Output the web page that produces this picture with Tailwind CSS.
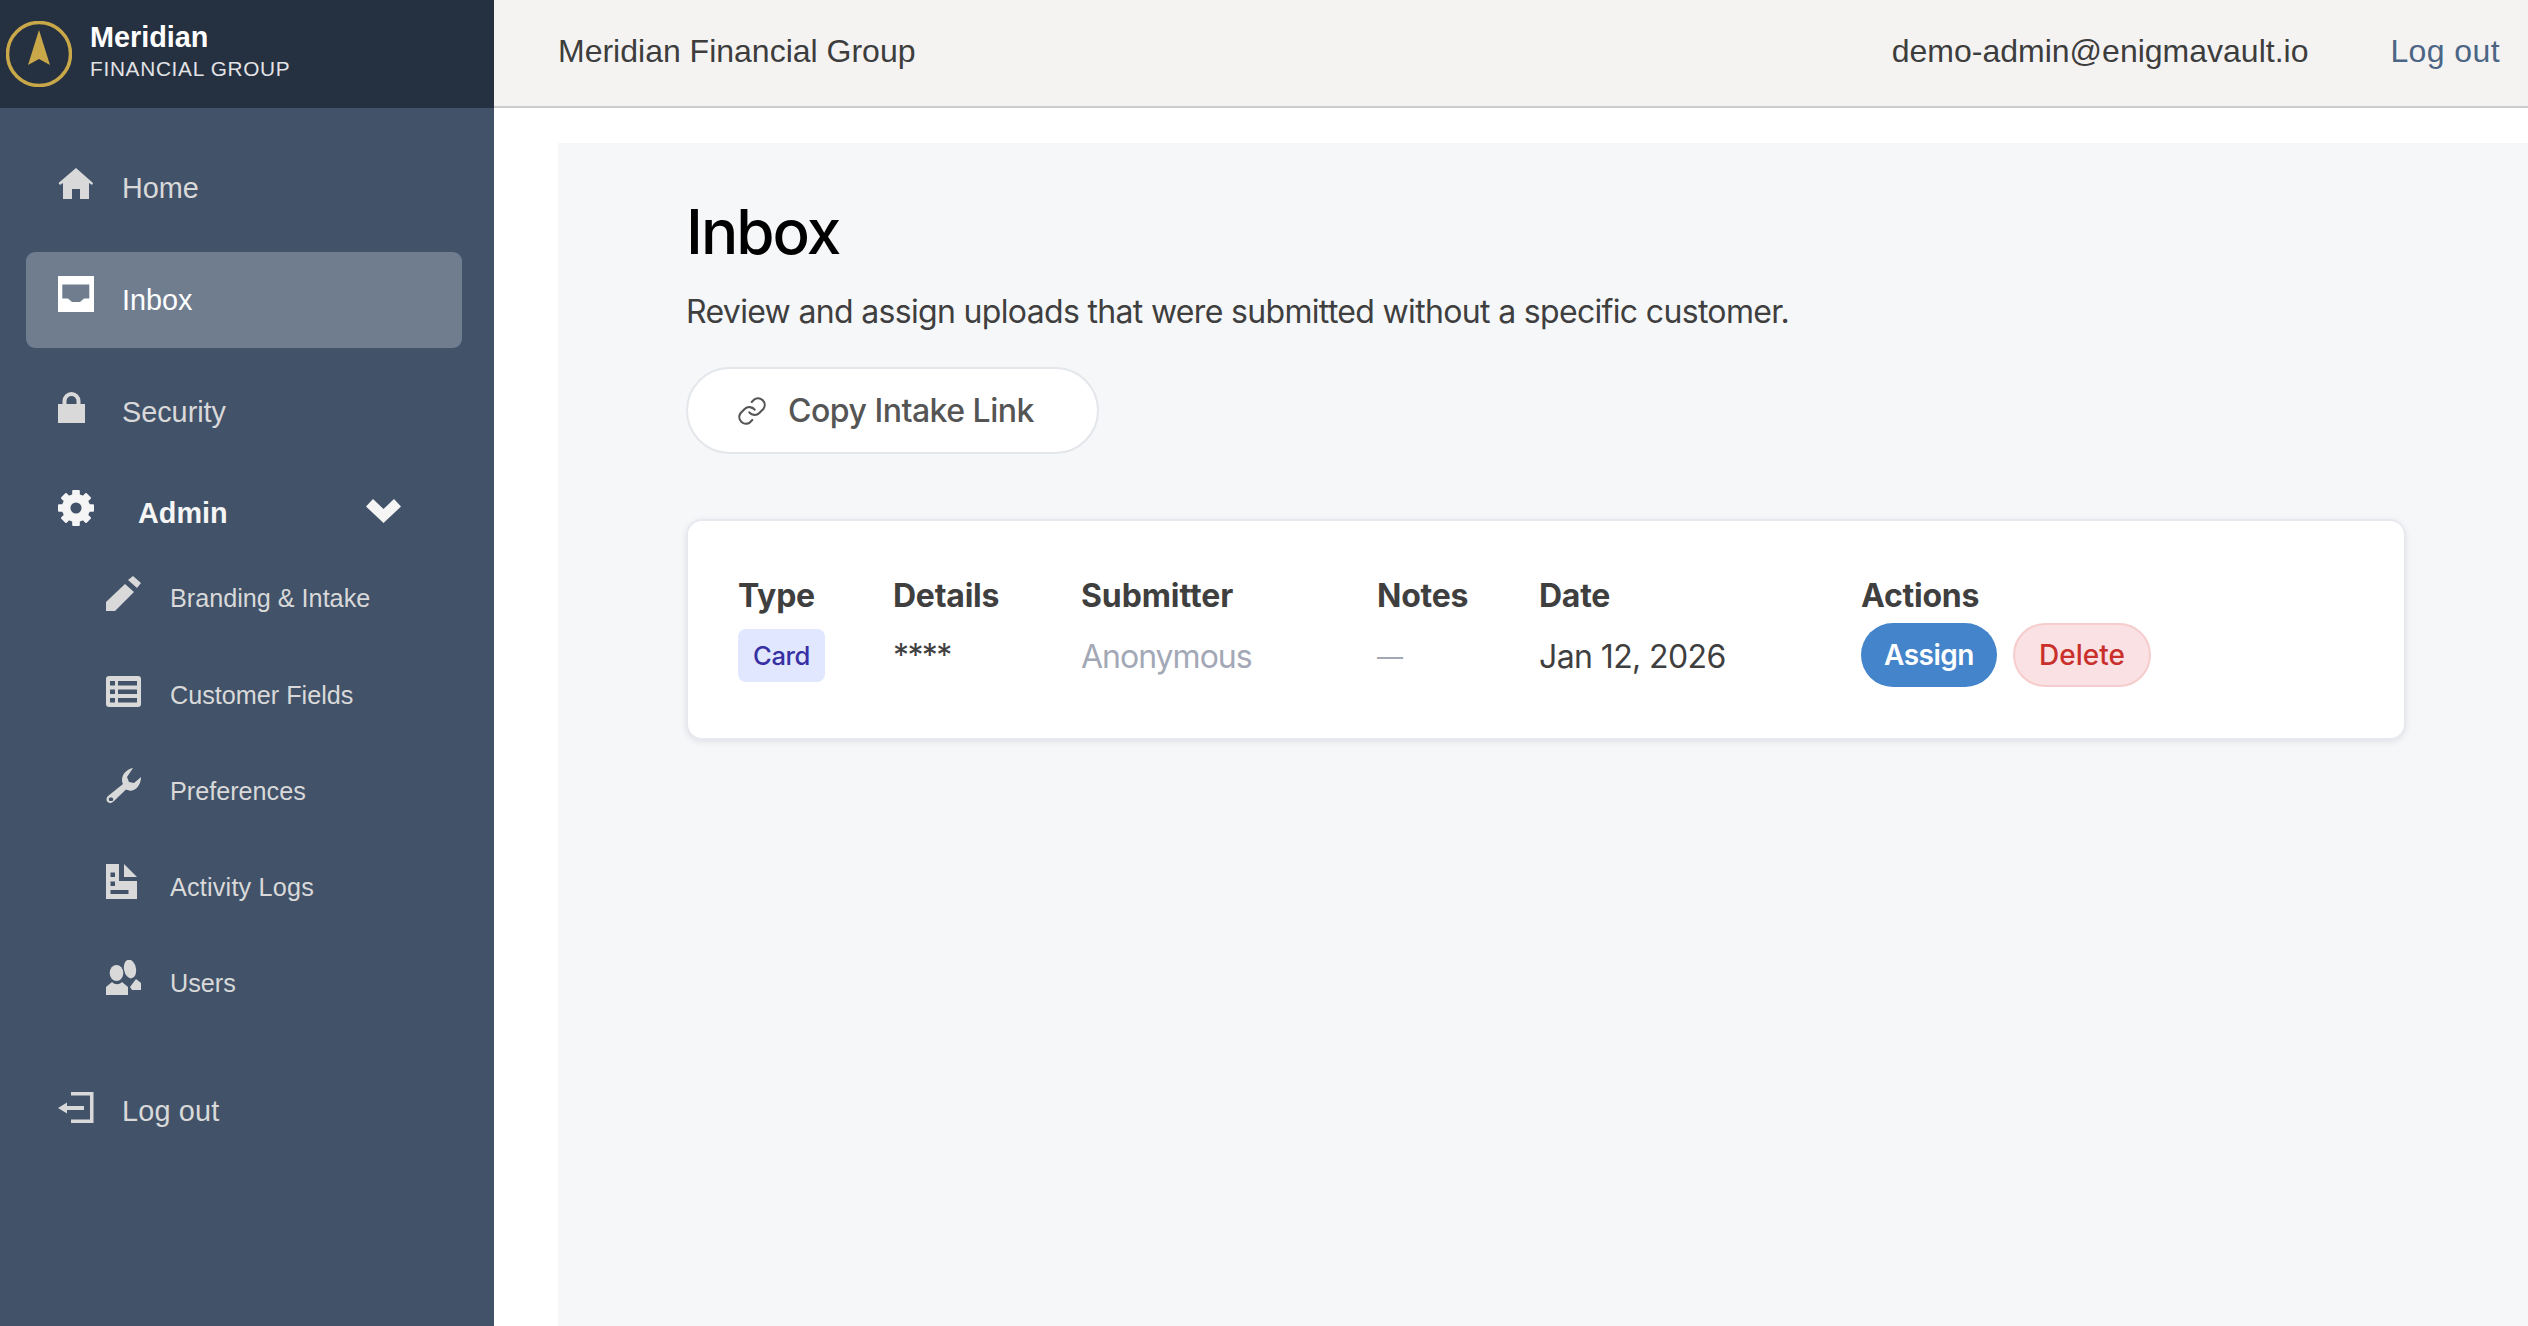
<!DOCTYPE html>
<html lang="en">
<head>
    <meta charset="UTF-8">
    <meta name="viewport" content="width=device-width, initial-scale=1.0">
    <title>Inbox - Meridian Financial Group</title>
    <script src="https://cdn.jsdelivr.net/npm/@tailwindcss/browser@4"></script>
</head>
<body class="bg-white">
<div class="flex h-[1326px] w-[2528px] overflow-hidden font-['Liberation_Sans',sans-serif]">
    <!-- Sidebar -->
    <aside class="w-[494px] shrink-0 bg-[#415269] text-[#d9d9d9]">
        <div class="flex h-[108px] items-center bg-[#253040] pl-[6px]">
            <svg class="w-[66px] h-[66px] mr-[18px] shrink-0" viewBox="0 0 66 66">
                <circle cx="33" cy="33" r="31.5" fill="none" stroke="#c8a848" stroke-width="3.5"/>
                <path d="M33 9 L44 44 L33 38 L22 44 Z" fill="#c8a848"/>
            </svg>
            <div class="-mt-[3px]">
                <div class="text-[28.8px] leading-[30px] font-bold text-white">Meridian</div>
                <div class="mt-[3px] text-[20.8px] leading-[28px] tracking-[0.7px] text-[#e2e3e6]">FINANCIAL GROUP</div>
            </div>
        </div>

        <nav class="pt-[32px] text-[28.8px]">
            <a class="flex h-[96px] ml-[26px] mr-[32px] px-[32px] pt-[1px] items-center">
                <span class="w-[64px] shrink-0">
                    <svg class="w-[36px] h-[32px] mb-[10px]" viewBox="0 0 36 32" fill="#d9d9d9"><path d="M18 0 L35 15 L34 17 L31 15 V31 H22 V21 H14 V31 H5 V15 L2 17 L0.5 15 Z"/></svg>
                </span>
                <span>Home</span>
            </a>
            <a class="flex h-[96px] ml-[26px] mr-[32px] mt-[16px] px-[32px] pt-[1px] items-center rounded-[9px] bg-[#707d8f] text-white">
                <span class="w-[64px] shrink-0">
                    <svg class="w-[36px] h-[36px] mb-[14px]" viewBox="0 0 36 36" fill="#fff"><path fill-rule="evenodd" d="M0 0 H36 V36 H0 Z M4.3 8.5 V22.5 H10 L14 26 H22 L26 22.5 H31.3 V8.5 Z"/></svg>
                </span>
                <span>Inbox</span>
            </a>
            <a class="flex h-[96px] ml-[26px] mr-[32px] mt-[16px] px-[32px] pt-[1px] items-center">
                <span class="w-[64px] shrink-0">
                    <svg class="w-[27px] h-[31px] mb-[10px]" viewBox="0 0 27 31" fill="#d9d9d9"><path fill-rule="evenodd" d="M0 12 H4.5 V9 A9 9 0 0 1 22.5 9 V12 H27 V31 H0 Z M8.5 12 H18.5 V9 A5 5 0 0 0 8.5 9 Z"/></svg>
                </span>
                <span>Security</span>
            </a>

            <!-- Admin group -->
            <div class="flex h-[64px] mx-[26px] mt-[21px] px-[32px] pt-[2px] items-center text-[#f5f5f5]">
                <span class="w-[80px] shrink-0">
                    <svg class="w-[36px] h-[36px] mb-[12px]" viewBox="0 0 36 36" fill="#f5f5f5">
                        <circle cx="18" cy="18" r="9.8" fill="none" stroke="#f5f5f5" stroke-width="8.5"/>
                        <g>
                            <rect x="14.2" y="0" width="7.6" height="6" rx="1"/>
                            <rect x="14.2" y="0" width="7.6" height="6" rx="1" transform="rotate(45 18 18)"/>
                            <rect x="14.2" y="0" width="7.6" height="6" rx="1" transform="rotate(90 18 18)"/>
                            <rect x="14.2" y="0" width="7.6" height="6" rx="1" transform="rotate(135 18 18)"/>
                            <rect x="14.2" y="0" width="7.6" height="6" rx="1" transform="rotate(180 18 18)"/>
                            <rect x="14.2" y="0" width="7.6" height="6" rx="1" transform="rotate(225 18 18)"/>
                            <rect x="14.2" y="0" width="7.6" height="6" rx="1" transform="rotate(270 18 18)"/>
                            <rect x="14.2" y="0" width="7.6" height="6" rx="1" transform="rotate(315 18 18)"/>
                        </g>
                    </svg>
                </span>
                <span class="w-[228px] shrink-0 font-bold">Admin</span>
                <svg class="w-[35px] h-[24px] mb-[6px]" viewBox="0 0 35 24" fill="#f5f5f5"><path d="M0 7.5 L7 0 L17.5 10 L28 0 L35 7.5 L17.5 24 Z"/></svg>
            </div>

            <div class="mt-[5px] text-[25.2px]">
                <a class="flex h-[96px] pl-[106px] pt-[2px] items-center">
                    <span class="w-[64px] shrink-0">
                        <svg class="w-[35px] h-[35px] mb-[12px]" viewBox="0 0 35 35" fill="#d9d9d9"><path d="M0 35 V26 L19 8 L28 16 L9 35 Z M22 4 L27 0 L35 7 L31 12 Z"/></svg>
                    </span>
                    <span>Branding &amp; Intake</span>
                </a>
                <a class="flex h-[96px] pl-[106px] pt-[3px] items-center">
                    <span class="w-[64px] shrink-0">
                        <svg class="w-[35px] h-[31px] mb-[8px]" viewBox="0 0 35 31" fill="#d9d9d9"><path fill-rule="evenodd" d="M3 0 H32 A3 3 0 0 1 35 3 V28 A3 3 0 0 1 32 31 H3 A3 3 0 0 1 0 28 V3 A3 3 0 0 1 3 0 Z M4 5 V9.5 H9 V5 Z M12 5 V9.5 H31 V5 Z M4 13.5 V18 H9 V13.5 Z M12 13.5 V18 H31 V13.5 Z M4 22 V26.5 H9 V22 Z M12 22 V26.5 H31 V22 Z"/></svg>
                    </span>
                    <span>Customer Fields</span>
                </a>
                <a class="flex h-[96px] pl-[106px] pt-[3px] items-center">
                    <span class="w-[64px] shrink-0">
                        <svg class="w-[35px] h-[35px] mb-[12px]" viewBox="0 0 35 35" fill="#d9d9d9"><path fill-rule="evenodd" d="M27 0 C21 1 16 6 16 12 C16 14 16.5 15 17 16 L2 28 C0 30 0 33 2 34 C4 36 6 35 8 33 L20 21.5 C22 22.5 24 23 26 22.5 C31 21.5 35 16 35 9 L28 15 L23 14 L21 9 Z M5 29.5 A1.8 1.8 0 1 0 5 33 A1.8 1.8 0 1 0 5 29.5 Z"/></svg>
                    </span>
                    <span>Preferences</span>
                </a>
                <a class="flex h-[96px] pl-[106px] pt-[3px] items-center">
                    <span class="w-[64px] shrink-0">
                        <svg class="w-[31px] h-[35px] mb-[12px]" viewBox="0 0 31 35" fill="#d9d9d9"><path fill-rule="evenodd" d="M0 0 H13 V17 H31 V35 H0 Z M4.5 8.5 V13 H9 V8.5 Z M4.5 17.5 V22 H9 V17.5 Z M4.5 26 V30 H22.5 V26 Z"/><path d="M18 0 L31 13 H18 Z"/></svg>
                    </span>
                    <span class="tracking-[0.2px]">Activity Logs</span>
                </a>
                <a class="flex h-[96px] pl-[106px] pt-[3px] items-center">
                    <span class="w-[64px] shrink-0">
                        <svg class="w-[35px] h-[35px] mb-[12px]" viewBox="0 0 35 35" fill="#d9d9d9">
                            <ellipse cx="10.5" cy="13" rx="6.8" ry="8"/>
                            <ellipse cx="24" cy="9" rx="6" ry="9.5" transform="rotate(-10 24 9)"/>
                            <path d="M0 35 V27 L6 22 C9 25 13 25 16 22 L22 27 V35 Z"/>
                            <path d="M26 30 L24 27 L30 19 L35 23 V30 Z"/>
                        </svg>
                    </span>
                    <span>Users</span>
                </a>
            </div>

            <a class="flex h-[96px] mx-[26px] mt-[32px] px-[32px] pt-[3px] items-center">
                <span class="w-[64px] shrink-0">
                    <svg class="w-[36px] h-[31px] mb-[8px]" viewBox="0 0 36 31" fill="#d9d9d9"><path d="M13 0 H35.5 V31 H13 V27.5 H32 V3.5 H13 Z M0 16 L9 10.5 V14 H26 V18 H9 V21.5 Z"/></svg>
                </span>
                <span class="tracking-[0.2px]">Log out</span>
            </a>
        </nav>
    </aside>

    <div class="flex-1 flex flex-col min-w-0">
        <!-- Top bar -->
        <header class="flex h-[108px] shrink-0 items-center border-b-2 border-[#cbcbcb] bg-[#f4f3f2] pl-[64px] pr-[28px] pb-[4px] text-[32px] text-[#3d3d3d]">
            <span>Meridian Financial Group</span>
            <span class="ml-auto">demo-admin@enigmavault.io</span>
            <a class="ml-[82px] tracking-[0.4px] text-[#4c6585]">Log out</a>
        </header>

        <!-- Main content -->
        <main class="mt-[35px] ml-[64px] flex-1 bg-[#f6f7f9] pl-[128px] pt-[53px] font-['Inter',sans-serif]">
            <h1 class="text-[62px] leading-[72px] font-[550] tracking-[-2px] text-black">Inbox</h1>
            <p class="mt-[24px] text-[32px] leading-[40px] tracking-[-0.67px] text-[#3f3f3f]">Review and assign uploads that were submitted without a specific customer.</p>

            <button class="mt-[35px] flex h-[87px] w-[413px] items-center rounded-full border-2 border-[#e3e6ea] bg-white pl-[48px] pt-[1px] text-[32px] font-medium tracking-[-0.5px] text-[#555555]">
                <svg class="w-[32px] h-[32px] mr-[20px] shrink-0" viewBox="0 0 24 24" fill="none" stroke="#555555" stroke-width="1.6" stroke-linecap="round" stroke-linejoin="round">
                    <path d="M10 13a5 5 0 0 0 7.5.5l3-3a5 5 0 0 0-7-7l-1.7 1.7"/>
                    <path d="M14 11a5 5 0 0 0-7.5-.5l-3 3a5 5 0 0 0 7 7l1.7-1.7"/>
                </svg>
                Copy Intake Link
            </button>

            <!-- Uploads table -->
            <div class="mt-[65px] w-[1720px] rounded-[16px] border-2 border-[#e8e9ef] bg-white pt-[54px] pb-[51px] pl-[50px] shadow-[0_2px_6px_rgba(30,40,60,0.1)]">
                <div class="grid grid-cols-[155px_188px_296px_162px_322px_auto] grid-rows-[40px_64px] gap-y-[8px] items-center text-[32px] text-[#3f3f3f]">
                    <div class="pt-[1px] font-bold tracking-[-0.25px]">Type</div>
                    <div class="pt-[1px] font-bold tracking-[-0.25px]">Details</div>
                    <div class="pt-[1px] font-bold tracking-[-0.1px]">Submitter</div>
                    <div class="pt-[1px] font-bold tracking-[-0.25px]">Notes</div>
                    <div class="pt-[1px] font-bold tracking-[-0.25px]">Date</div>
                    <div class="pt-[1px] font-bold tracking-[-0.25px]">Actions</div>

                    <div><span class="inline-flex h-[53px] w-[87px] items-center justify-center rounded-[8px] bg-[#e0e7ff] pt-[2px] text-[25.6px] font-medium tracking-[-0.4px] text-[#3730a3]">Card</span></div>
                    <div class="pt-[2px] tracking-[-1.6px]">****</div>
                    <div class="pt-[3px] tracking-[-1px] text-[#a3a8b6]">Anonymous</div>
                    <div class="pt-[3px] text-[26px] text-[#a3a8b6]">—</div>
                    <div class="pt-[3px] tracking-[-0.6px]">Jan 12, 2026</div>
                    <div class="flex gap-[16px]">
                        <button class="h-[64px] w-[136px] rounded-full bg-[#4484cb] text-[28px] font-semibold tracking-[-0.5px] text-white">Assign</button>
                        <button class="h-[64px] w-[138px] rounded-full border-2 border-[#f6cccc] bg-[#fae1e3] text-[28px] font-medium text-[#c9302c]">Delete</button>
                    </div>
                </div>
            </div>
        </main>
    </div>
</div>
</body>
</html>
